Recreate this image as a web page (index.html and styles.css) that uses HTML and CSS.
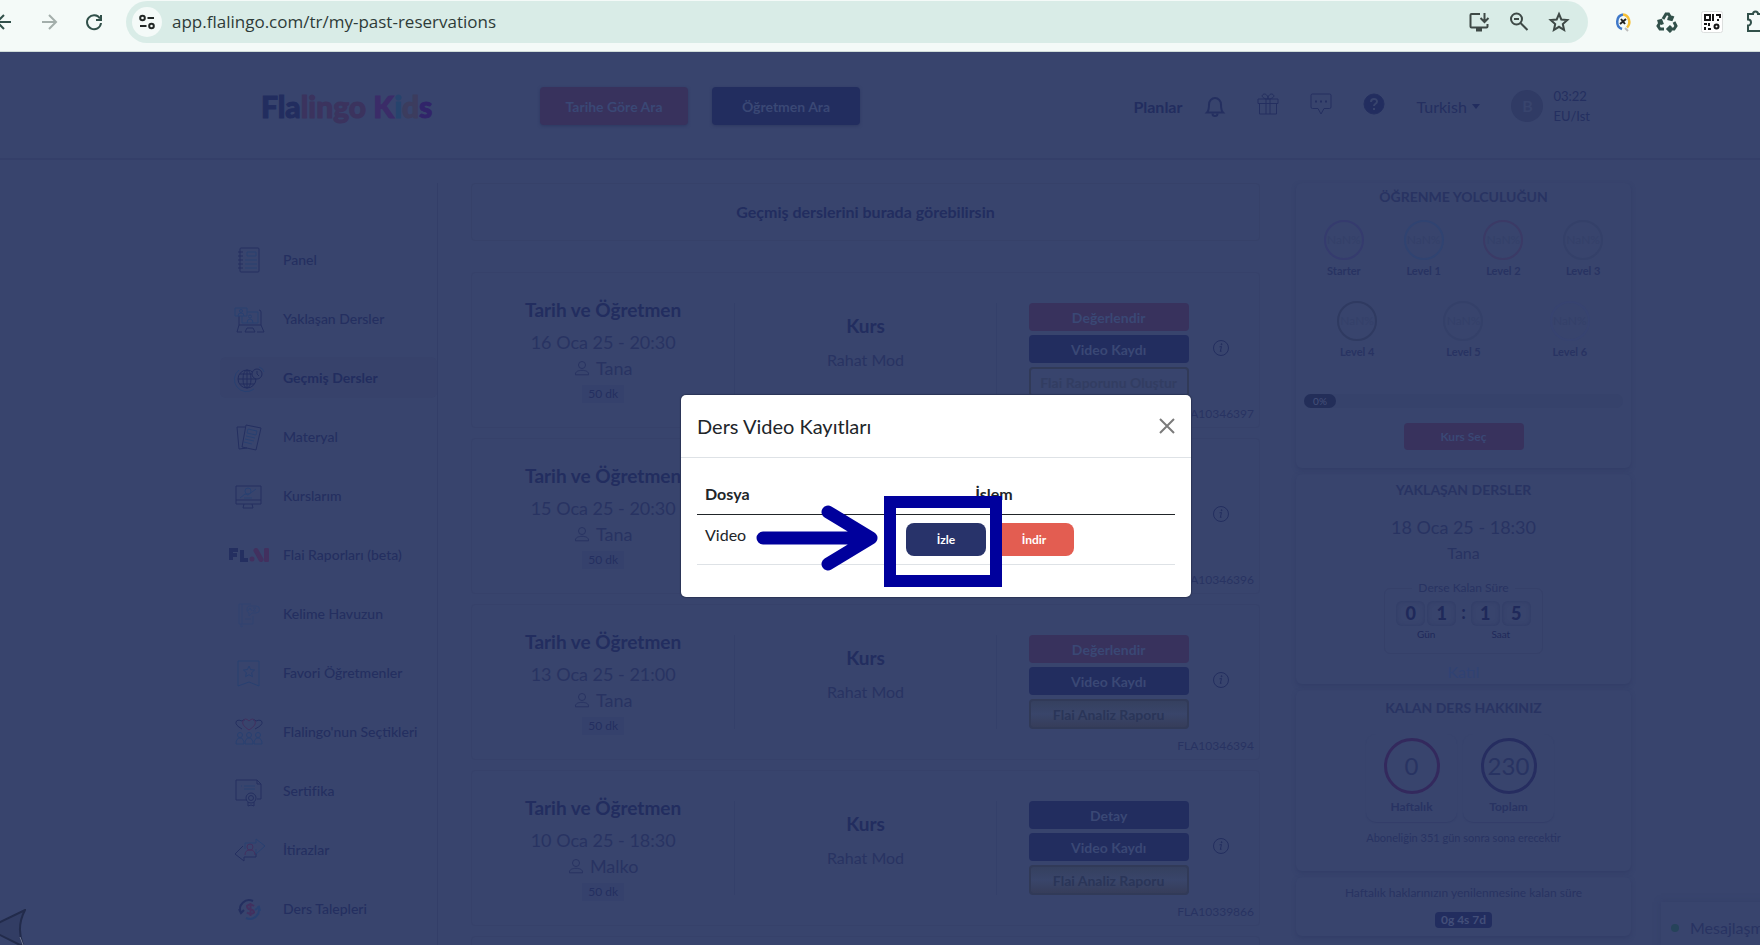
FILE: index.html
```html
<!DOCTYPE html>
<html lang="tr">
<head>
  <meta charset="utf-8">
  <title>Flalingo Kids</title>
  <link rel="stylesheet" href="styles.css">
</head>
<body>
  <svg class="defs" width="0" height="0">
    <symbol id="user" viewBox="0 0 16 16"><circle cx="8" cy="5" r="3.500"/><path d="M1.500 14.800v-.8c0-2.500 3-3.700 6.500-3.700s6.500 1.200 6.500 3.700v.8z"/></symbol>
    <symbol id="info" viewBox="0 0 18 18"><circle cx="9" cy="9" r="7.500"/><path d="M7.500 7.800l2-.3-1.200 5 1.300-.4"/><circle cx="9.600" cy="5.200" r=".5"/></symbol>
  </svg>

  <!-- browser bar -->
  <div class="toolbar">
    <button class="tool back" type="button" aria-label="Back"><svg width="11" height="20" viewBox="0 0 11 20"><path d="M11 10H-3M4 3l-7 7 7 7"/></svg></button>
    <button class="tool forward" type="button" aria-label="Forward"><svg width="20" height="20" viewBox="0 0 20 20"><path d="M3 10h14M10 3l7 7-7 7"/></svg></button>
    <button class="tool reload" type="button" aria-label="Reload"><svg width="20" height="20" viewBox="0 0 20 20"><path d="M16 6.500A7 7 0 1 0 17 11M17 3v5h-5"/></svg></button>
    <div class="omnibox">
      <button class="site" type="button" aria-label="Site info"><svg width="18" height="18" viewBox="0 0 18 18"><circle cx="4.500" cy="5" r="2.300"/><path d="M9.500 5H16M2 13h6.500"/><circle cx="13.500" cy="13" r="2.300"/></svg></button>
      <input class="url" type="text" aria-label="Address" value="app.flalingo.com/tr/my-past-reservations">
      <button class="tool" type="button" aria-label="Install"><svg width="22" height="22" viewBox="0 0 22 22"><path d="M12 3H3.500a1 1 0 0 0-1 1v11.500a1 1 0 0 0 1 1h15a1 1 0 0 0 1-1V13M16.500 2v8.500M12.500 7l4 4 4-4"/><path d="M8 18.500h6" stroke-width="4"/></svg></button>
      <button class="tool" type="button" aria-label="Zoom"><svg width="22" height="22" viewBox="0 0 22 22"><circle cx="8.500" cy="8" r="5.500"/><path d="M6 8h5M12.500 12l7 7"/></svg></button>
      <button class="tool" type="button" aria-label="Bookmark"><svg width="22" height="22" viewBox="0 0 22 22"><path d="M11 3l2.300 5.500 6 .5-4.500 4 1.300 6-5.100-3.200L5.900 19l1.300-6-4.500-4 6-.5z"/></svg></button>
    </div>
    <div class="extensions">
      <svg width="20" height="20" viewBox="0 0 20 20"><path d="M10 2.500a7 7.500 0 0 0-1 14.500" stroke="#3f78c9" stroke-width="2.500"/><path d="M10 2.500a7 7.500 0 0 1 4 13" stroke="#f6bf35" stroke-width="2.500"/><path d="M7 12l6-5M8 7l4 5" stroke="#222" stroke-width="2"/><path d="M12 16l3 3" stroke="#bbb" stroke-width="2"/></svg>
      <svg width="22" height="22" viewBox="0 0 22 22" stroke="#6c6f6e" stroke-width="3"><path d="M7 8l3-5h2.500l3 5M17 5l-1.500 3.500-4-1"/><path d="M18 11l2 4-2 3h-4M15 15l-3 3 3 3"/><path d="M8 18H4l-2-3 3-5M1.500 10.500L5 9.500l1.500 4"/></svg>
      <svg width="22" height="22" viewBox="0 0 22 22"><rect x=".5" y=".5" width="21" height="21" rx="2" fill="#fff" stroke="#dcdfde"/><g stroke="#161616" stroke-width="2"><rect x="4" y="4" width="5" height="5"/><path d="M12 3v7M15 4h4v3M17 8v2M3 13h3M8 12v3M4 16v3M7 18h3"/><circle cx="15.500" cy="15.500" r="2"/></g></svg>
      <svg width="14" height="24" viewBox="0 0 14 24" stroke="#31504a" stroke-width="2"><path d="M14 4h-2a2.500 2.500 0 0 0-5 0H2v5.500a3 3 0 0 1 0 6V21h12"/></svg>
    </div>
  </div>

  <header class="header">
    <a class="logo" href="#"><span>Fla</span><span class="l-red">lingo</span> <span class="l-pink">K</span><span class="l-teal">i</span><span class="l-brown">d</span><span class="l-purple">s</span></a>
    <div class="search">
      <button class="btn red" type="button">Tarihe Göre Ara</button>
      <button class="btn navy" type="button">Öğretmen Ara</button>
    </div>
    <nav class="topnav">
      <a class="plans" href="#">Planlar</a>
      <svg width="22" height="26" viewBox="0 0 22 26" stroke-width="2"><path d="M3 19.500c2-2 2-4 2-8a6 6.500 0 0 1 12 0c0 4 0 6 2 8z"/><path d="M8.500 20.500a2.500 2.500 0 0 0 5 0"/></svg>
      <svg width="22" height="26" viewBox="0 0 22 26"><path d="M1 6h20v4.500H1zM2.500 10.500h17V21h-17zM9 6v15M13 6v15M11 6C6 6 4 3 6 1.500S11 2 11 6c0-4 3-6 5-4.500S16 6 11 6"/></svg>
      <svg width="22" height="26" viewBox="0 0 22 26"><path d="M1 2.500a1.500 1.500 0 0 1 1.500-1.500h17A1.500 1.500 0 0 1 21 2.500V14a1.500 1.500 0 0 1-1.500 1.500H14L11 21l-3-5.500H2.500A1.500 1.500 0 0 1 1 14z"/><path d="M5 8.500h2M10 8.500h2M15 8.500h2" stroke-width="2"/></svg>
      <svg width="22" height="26" viewBox="0 0 22 26"><circle cx="11" cy="11" r="10" fill="#222d5f"/><path d="M8 9c0-4 6-4 6-.5 0 2.500-3 2-3 4.500M11 15v2" stroke="#38446d" stroke-width="2"/></svg>
      <label class="lang"><select aria-label="Dil"><option>Turkish</option></select><svg width="8" height="5" viewBox="0 0 8 5"><path d="M0 0h8L4 5z" fill="#222d5f" stroke="none"/></svg></label>
      <div class="account"><span class="avatar">B</span><span class="clock">03:22<br>EU/Ist</span></div>
    </nav>
  </header>

  <div class="page">
    <nav class="sidebar">
      <a href="#"><svg viewBox="0 0 32 32"><rect x="7" y="4" width="19" height="24" rx="1"/><path d="M5 8h5M5 12h5M5 16h5M5 20h5M5 24h5"/><path class="blue" d="M14 8h9v4h-9zM12 16h12M12 20h12M12 24h12"/></svg>Panel</a>
      <a href="#"><svg viewBox="0 0 32 32"><path d="M28 22V9q0-2-2-2M6 13v9h22M6 22l-2 7h5M12 29l2-4h6l2 4zM24 29h7l-3-7"/><path class="blue" d="M2 5h12v8H2zM9 13v7h16V9H14M5 13q0-3 3-3t3 3M14 20q0-4 3-4t3 4"/><circle class="blue" cx="8" cy="8" r="1.500"/><circle class="blue" cx="17" cy="13.500" r="1.500"/></svg>Yaklaşan Dersler</a>
      <a class="active" href="#"><svg viewBox="0 0 32 32"><circle cx="14" cy="17" r="9"/><ellipse cx="14" cy="17" rx="4" ry="9"/><path d="M14 8v18M5 17h18M7 12h12M7 22h14"/><circle cx="24" cy="12" r="5" fill="#37426b"/><path d="M24 9v3l2 2"/><path class="blue" d="M6 8a12 12 0 0 0 15 19M26 5q4 1 5 5"/></svg>Geçmiş Dersler</a>
      <a href="#"><svg viewBox="0 0 32 32"><path d="M12 6H4l2 22 8-1M13 4l15 3-5 22-14-3z"/><path class="blue" d="M15 8l9 2-1 4-9-2zM13 15l9 2M12 18l9 2M11 21l8 2"/></svg>Materyal</a>
      <a href="#"><svg viewBox="0 0 32 32"><path d="M3 6h25v18H3zM3 20h25M11 24l-1 4h10l-1-4"/><path class="blue" d="M7 18l5-4 3 1 8-6M11 18h8"/><circle class="blue" cx="15" cy="11" r="3"/></svg>Kurslarım</a>
      <a href="#"><svg class="flai" viewBox="0 0 40 14" width="40" height="14"><path d="M2 12V2h7M2 7h6M13 2v10h6" stroke-width="4"/><path class="rose" d="M23 11v.1M27 2.500l5 9M37.500 2v10" stroke-width="5" stroke-linecap="round"/></svg>Flai Raporları (beta)</a>
      <a href="#"><svg class="faint" viewBox="0 0 32 32"><path d="M6 6h12M6 6v20h14v-8M9 6v20M8 26v3l2-1"/><path d="M16 8h7a3 3 0 0 1 0 7h-4l-3 3v-3a4 4 0 0 1 0-7M12 21h6M15 13l2-3 2 3M20 10h3l-3 3h3"/></svg>Kelime Havuzun</a>
      <a href="#"><svg class="blue" viewBox="0 0 32 32"><path d="M5 4h21v25l-10-4-11 4z"/><path d="M16 9l1.600 3.600 4 .4-3 2.700.9 4L16 17.700l-3.500 2 .9-4-3-2.700 4-.4z"/></svg>Favori Öğretmenler</a>
      <a href="#"><svg viewBox="0 0 32 32"><path d="M9 13Q2 9 3 6t6-1q2-2 3-1M22 13q8-4 7-7t-6-1q-2-2-3-1"/><path class="rose" d="M16 14Q8 9 10 5t6 0q4-4 6 0t-6 9"/><g class="blue"><circle cx="7" cy="19" r="2.500"/><circle cx="16" cy="19" r="2.500"/><circle cx="25" cy="19" r="2.500"/><path d="M3 28q0-6 4-6t4 6zM12 28q0-6 4-6t4 6zM21 28q0-6 4-6t4 6z"/></g></svg>Flalingo'nun Seçtikleri</a>
      <a href="#"><svg viewBox="0 0 32 32"><path d="M14 25H3V5h21l4 4v15h-4M24 5v4h4"/><path class="blue" d="M8 11h1M11 11h11M11 14h11"/><circle cx="18" cy="23" r="5"/><circle cx="18" cy="23" r="2.500"/><path d="M15 27v4l3-1 3 1v-4"/></svg>Sertifika</a>
      <a href="#"><svg viewBox="0 0 32 32"><path d="M10 12l-8 8 9 7v-4h12v-4"/><path class="blue" d="M12 15V9h11V5l9 7-9 8v-5"/><path class="rose" d="M12 21q0-5 5-5t5 5"/><circle class="rose" cx="17" cy="13" r="3"/></svg>İtirazlar</a>
      <a href="#"><svg viewBox="0 0 32 32"><path d="M8 20A9 9 0 0 1 20 8M6 16l2 4 3-3" stroke-width="2"/><path class="blue" d="M13 25a9 9 0 0 0 12-12M27 18l-1-4-4 3" stroke-width="2"/><path class="rose" d="M21 13q-4-3-7 0 0 3 3.500 3.500t3.500 3q-3 3-7 0M17.500 10v13" stroke-width="2"/></svg>Ders Talepleri</a>
    </nav>

    <main class="main">
      <h1 class="intro">Geçmiş derslerini burada görebilirsin</h1>
      <section class="lesson">
        <div class="when"><h2>Tarih ve Öğretmen</h2><p class="date">16 Oca 25 - 20:30</p><p class="tutor"><svg width="16" height="16"><use href="#user"/></svg>Tana</p><span class="mins">50 dk</span></div>
        <div class="course"><h2>Kurs</h2><p>Rahat Mod</p></div>
        <div class="actions">
          <div class="stack"><button class="btn red" type="button">Değerlendir</button><button class="btn navy" type="button">Video Kaydı</button><button class="btn gold open" type="button">Flai Raporunu Oluştur</button></div>
          <svg class="info" width="18" height="18"><use href="#info"/></svg>
          <p class="code">FLA10346397</p>
        </div>
      </section>
      <section class="lesson">
        <div class="when"><h2>Tarih ve Öğretmen</h2><p class="date">15 Oca 25 - 20:30</p><p class="tutor"><svg width="16" height="16"><use href="#user"/></svg>Tana</p><span class="mins">50 dk</span></div>
        <div class="course"><h2>Kurs</h2><p>Rahat Mod</p></div>
        <div class="actions">
          <div class="stack"><button class="btn red" type="button">Değerlendir</button><button class="btn navy" type="button">Video Kaydı</button><button class="btn gold" type="button">Flai Analiz Raporu</button></div>
          <svg class="info" width="18" height="18"><use href="#info"/></svg>
          <p class="code">FLA10346396</p>
        </div>
      </section>
      <section class="lesson">
        <div class="when"><h2>Tarih ve Öğretmen</h2><p class="date">13 Oca 25 - 21:00</p><p class="tutor"><svg width="16" height="16"><use href="#user"/></svg>Tana</p><span class="mins">50 dk</span></div>
        <div class="course"><h2>Kurs</h2><p>Rahat Mod</p></div>
        <div class="actions">
          <div class="stack"><button class="btn red" type="button">Değerlendir</button><button class="btn navy" type="button">Video Kaydı</button><button class="btn gold" type="button">Flai Analiz Raporu</button></div>
          <svg class="info" width="18" height="18"><use href="#info"/></svg>
          <p class="code">FLA10346394</p>
        </div>
      </section>
      <section class="lesson">
        <div class="when"><h2>Tarih ve Öğretmen</h2><p class="date">10 Oca 25 - 18:30</p><p class="tutor"><svg width="16" height="16"><use href="#user"/></svg>Malko</p><span class="mins">50 dk</span></div>
        <div class="course"><h2>Kurs</h2><p>Rahat Mod</p></div>
        <div class="actions">
          <div class="stack"><button class="btn navy" type="button">Detay</button><button class="btn navy" type="button">Video Kaydı</button><button class="btn gold" type="button">Flai Analiz Raporu</button></div>
          <svg class="info" width="18" height="18"><use href="#info"/></svg>
          <p class="code">FLA10339866</p>
        </div>
      </section>
      <section class="lesson"></section>
    </main>

    <aside class="aside">
      <section class="panel journey">
        <h3>ÖĞRENME YOLCULUĞUN</h3>
        <div class="levels">
          <div><span class="ring purple">NaN%</span>Starter</div>
          <div><span class="ring teal">NaN%</span>Level 1</div>
          <div><span class="ring wine">NaN%</span>Level 2</div>
          <div><span class="ring">NaN%</span>Level 3</div>
        </div>
        <div class="levels three">
          <div><span class="ring dark">NaN%</span>Level 4</div>
          <div><span class="ring">NaN%</span>Level 5</div>
          <div><span class="ring pale">NaN%</span>Level 6</div>
        </div>
        <div class="progress"><span>0%</span></div>
        <button class="btn red" type="button">Kurs Seç</button>
      </section>
      <section class="panel next">
        <h3>YAKLAŞAN DERSLER</h3>
        <p class="date">18 Oca 25 - 18:30</p>
        <p class="name">Tana</p>
        <fieldset>
          <legend>Derse Kalan Süre</legend>
          <div class="count">
            <div><b>0</b><b>1</b><small>Gün</small></div>
            <i>:</i>
            <div><b>1</b><b>5</b><small>Saat</small></div>
          </div>
        </fieldset>
        <a class="join" href="#">Katıl</a>
      </section>
      <section class="panel rights">
        <h3>KALAN DERS HAKKINIZ</h3>
        <div class="totals">
          <div><span class="total week">0</span>Haftalık</div>
          <div><span class="total">230</span>Toplam</div>
        </div>
        <p>Aboneliğin 351 gün sonra sona erecektir</p>
      </section>
      <section class="panel renew">
        <p>Haftalık haklarınızın yenilenmesine kalan süre</p>
        <span class="left">0g 4s 7d</span>
      </section>
    </aside>
  </div>

  <button class="chat" type="button"><span class="dot"></span>Mesajlaşma</button>
  <svg class="corner" width="26" height="36" viewBox="0 0 26 36"><path d="M-2 14L25 1Q16 18 23 36H20L-2 25z" fill="#323d64" stroke="#222b4b" stroke-width="2"/><path d="M20 28l3 8" stroke="#747c96"/></svg>

  <div class="backdrop">
    <div class="modal" role="dialog" aria-labelledby="modalTitle">
      <div class="modal-header">
        <h4 id="modalTitle">Ders Video Kayıtları</h4>
        <button class="close" type="button" aria-label="Kapat"><svg width="16" height="16" viewBox="0 0 16 16"><path d="M1 1l14 14M15 1L1 15"/></svg></button>
      </div>
      <div class="modal-body">
        <table class="files">
          <thead><tr><th>Dosya</th><th class="center">İşlem</th></tr></thead>
          <tbody><tr><td>Video</td><td class="ops"><button class="watch" type="button">İzle</button><button class="download" type="button">İndir</button></td></tr></tbody>
        </table>
      </div>
      <svg class="arrow" width="122" height="66" viewBox="0 0 122 66"><path d="M7 33h108M72 7l43 26-43 26"/></svg>
      <div class="frame"></div>
    </div>
  </div>
</body>
</html>
```
FILE: styles.css
```css
* {
  box-sizing: border-box;
}
body {
  margin: 0;
  height: 100vh;
  overflow: hidden;
  position: relative;
  display: flex;
  flex-direction: column;
  background: #38446d;
  color: #283362;
  font-family: Lato, "Open Sans", sans-serif;
  font-size: 16px;
}
h1, h2, h3, h4, p {
  margin: 0;
}
a {
  color: inherit;
  text-decoration: none;
}
button, input, select {
  font: inherit;
  color: inherit;
  border: 0;
  padding: 0;
  background: none;
}
svg {
  fill: none;
  stroke: currentColor;
  flex: none;
}
.defs {
  position: absolute;
}

/* browser bar */
.toolbar {
  flex: none;
  height: 52px;
  padding-bottom: 8px;
  display: flex;
  align-items: center;
  background: #f4faf8;
  border-bottom: 1px solid #cfdcd9;
  color: #31504a;
}
.tool {
  display: flex;
  stroke-width: 2;
}
.forward {
  margin-left: 28px;
  color: #a3aeab;
}
.reload {
  margin: 0 22px 0 25px;
}
.omnibox {
  flex: 1;
  height: 42px;
  padding: 0 18px 0 6px;
  display: flex;
  align-items: center;
  gap: 18px;
  border-radius: 21px;
  background: #d9ece7;
  color: #3e4946;
}
.site {
  width: 30px;
  height: 30px;
  display: flex;
  align-items: center;
  justify-content: center;
  border-radius: 50%;
  background: #f4faf8;
  color: #202624;
  stroke-width: 2;
}
.url {
  flex: 1;
  margin-left: -8px;
  font-family: "Open Sans", sans-serif;
  font-size: 17px;
  color: #2e3b38;
}
.extensions {
  display: flex;
  align-items: center;
  gap: 23px;
  margin-left: 25px;
}

/* site header */
.header {
  flex: none;
  height: 108px;
  padding: 2px 170px 0 261px;
  display: flex;
  align-items: center;
  border-bottom: 2px solid #343f69;
}
.logo {
  width: 279px;
  font-size: 30px;
  font-weight: 900;
  color: #222d5f;
  -webkit-text-stroke: 1px;
}
.l-red { color: #3b335e; }
.l-pink { color: #3b2c68; }
.l-teal { color: #26436d; }
.l-brown { color: #3c3c5e; }
.l-purple { color: #31246a; }
.search {
  display: flex;
  gap: 24px;
}
.btn {
  border-radius: 4px;
  font-weight: 700;
  font-size: 14px;
  color: #3a4875;
}
.red { background: #38325d; }
.navy { background: #222d5f; }
.search .btn {
  width: 148px;
  height: 38px;
  box-shadow: 0 1px 3px #2d3862;
}
.topnav {
  margin-left: auto;
  display: flex;
  align-items: center;
  gap: 31px;
  color: #242f60;
}
.plans {
  margin-right: -9px;
  font-weight: 700;
  color: #222d5f;
}
.lang {
  display: flex;
  align-items: center;
  gap: 5px;
}
.lang select {
  appearance: none;
}
.account {
  display: flex;
  align-items: center;
  gap: 10px;
}
.avatar {
  width: 32px;
  height: 32px;
  line-height: 32px;
  border-radius: 50%;
  text-align: center;
  font-weight: 700;
  background: #303b65;
  color: #38446d;
}
.clock {
  font-size: 13px;
  line-height: 20px;
}

/* columns */
.page {
  flex: 1;
  min-height: 0;
  overflow: hidden;
  display: grid;
  grid-template-columns: 218px minmax(0, 1fr) 335px;
  padding: 23px 129px 0 220px;
}
.sidebar {
  display: flex;
  flex-direction: column;
  gap: 18px;
  padding-top: 56px;
  border-right: 1px solid #333e68;
  font-size: 14px;
  font-weight: 500;
  color: #242f60;
}
.sidebar a {
  height: 41px;
  display: flex;
  align-items: center;
  gap: 18px;
  padding-left: 13px;
  white-space: nowrap;
}
.sidebar svg {
  width: 32px;
  height: 32px;
}
.sidebar .flai {
  width: 40px;
  height: 14px;
  margin: 0 -4px;
}
.sidebar .active {
  background: #37426b;
  border-radius: 6px;
  font-weight: 700;
  color: #222d5f;
}
.blue { stroke: #284071; }
.rose { stroke: #42305f; }
.faint { stroke: #304371; }

.main {
  padding: 0 36px 0 33px;
}
.intro {
  height: 58px;
  margin-bottom: 31px;
  line-height: 55px;
  border: 1px solid #364169;
  border-radius: 4px;
  text-align: center;
  font-size: 16px;
  color: #222d5f;
}
.lesson {
  display: grid;
  grid-template-columns: repeat(3, 1fr);
  min-height: 156px;
  margin-bottom: 10px;
  border: 1px solid #36416a;
  border-radius: 4px;
}
.lesson h2 {
  font-size: 19px;
  line-height: 28px;
  color: #222d5f;
}
.when {
  padding-top: 23px;
  text-align: center;
}
.date {
  margin-top: 4px;
  font-size: 18px;
  line-height: 28px;
}
.tutor {
  display: flex;
  justify-content: center;
  align-items: center;
  gap: 6px;
  font-size: 18px;
  line-height: 24px;
}
.mins {
  display: inline-block;
  margin-top: 5px;
  padding: 0 6px;
  font-size: 12px;
  line-height: 18px;
  background: #35416c;
  color: #242f60;
}
.course {
  margin: 30px 0;
  padding-top: 9px;
  border: solid #34406a;
  border-width: 0 1px;
  text-align: center;
  line-height: 24px;
}
.course p {
  margin-top: 8px;
}
.actions {
  display: grid;
  grid-template-columns: 160px 1fr;
  align-content: start;
  align-items: center;
  column-gap: 23px;
  padding: 30px 5px 0 32px;
}
.info {
  margin-bottom: 4px;
  color: #232e5f;
}
.stack {
  display: flex;
  flex-direction: column;
  gap: 4px;
}
.stack .btn {
  height: 28px;
}
.stack .gold {
  height: 30px;
  border: 2px solid #313a58;
  background: linear-gradient(#35405f, #39456a, #363d5a);
  color: #2a3558;
}
.stack .open {
  background: none;
  color: #323d62;
}
.code {
  grid-column: 1 / 3;
  margin-top: 8px;
  text-align: right;
  font-size: 12px;
  line-height: 18px;
}

/* right column */
.aside {
  display: flex;
  flex-direction: column;
  gap: 6px;
}
.panel {
  display: flex;
  flex-direction: column;
  align-items: center;
  border-radius: 6px;
  box-shadow: 0 2px 4px #323d67;
}
.panel h3 {
  font-size: 14px;
  line-height: 20px;
}
.journey {
  padding: 4px 8px 18px;
}
.levels {
  align-self: stretch;
  display: grid;
  grid-template-columns: repeat(4, 1fr);
  margin-top: 13px;
  text-align: center;
  font-size: 11px;
  font-weight: 700;
  line-height: 16px;
}
.three {
  grid-template-columns: repeat(3, 1fr);
  margin-top: 22px;
}
.ring {
  display: block;
  width: 40px;
  height: 40px;
  margin: 0 auto 3px;
  border: 2px solid #344069;
  border-radius: 50%;
  font-size: 12px;
  font-weight: 400;
  line-height: 36px;
  color: #344069;
}
.purple { border-color: #353b6e; }
.teal { border-color: #304371; }
.wine { border-color: #3b3a66; }
.dark { border-color: #2f3a61; }
.pale { border-color: #374370; }
.progress {
  align-self: stretch;
  margin: 34px 0 15px;
  border-radius: 7px;
  background: #36426b;
}
.progress span {
  display: block;
  width: 32px;
  border-radius: 7px;
  text-align: center;
  font-size: 10px;
  line-height: 14px;
  background: #232e59;
  color: #46517a;
}
.journey .btn {
  width: 120px;
  height: 27px;
  font-size: 12px;
}
.next {
  padding-top: 6px;
}
.next .date {
  margin-top: 13px;
}
.name {
  line-height: 24px;
}
.next fieldset {
  width: 159px;
  margin: 14px 0 6px;
  padding: 4px 0 12px;
  border: 1px solid #354069;
  border-radius: 6px;
}
.next legend {
  margin: 0 auto;
  padding: 0 6px;
  font-size: 12px;
  line-height: 18px;
}
.count {
  display: flex;
  justify-content: center;
  gap: 5px;
  font-size: 18px;
  font-weight: 700;
  color: #1f295a;
}
.count div {
  display: grid;
  grid-template-columns: 29px 29px;
  gap: 1px 2px;
}
.count b {
  border-radius: 6px;
  text-align: center;
  line-height: 25px;
  box-shadow: inset 0 0 4px #2f3a65;
}
.count i {
  font-style: normal;
}
.count small {
  grid-column: 1 / 3;
  text-align: center;
  font-size: 10px;
  font-weight: 400;
  line-height: 14px;
}
.join {
  line-height: 24px;
  color: #304273;
}
.rights {
  padding: 8px 0 25px;
}
.totals {
  display: flex;
  gap: 6px;
  margin: 16px 7px 8px 0;
}
.totals div {
  width: 91px;
  padding: 4px 0 6px;
  border-radius: 10px;
  text-align: center;
  font-size: 12px;
  font-weight: 700;
  line-height: 18px;
  box-shadow: 0 1px 1px #333e69;
}
.total {
  display: block;
  width: 56px;
  height: 56px;
  margin: 0 auto 4px;
  border: 3px solid #262d60;
  border-radius: 50%;
  font-size: 24px;
  font-weight: 400;
  line-height: 50px;
}
.week {
  border-color: #33295d;
}
.rights p {
  font-size: 11px;
  line-height: 16px;
}
.renew {
  gap: 10px;
  padding: 7px 0 8px;
  font-size: 12px;
  line-height: 18px;
}
.left {
  padding: 0 6px;
  border-radius: 4px;
  font-weight: 700;
  line-height: 16px;
  background: #222d5f;
  color: #434f79;
}

.chat {
  position: absolute;
  left: 1661px;
  bottom: 0;
  height: 43px;
  padding: 8px 10px 0;
  display: flex;
  align-items: center;
  gap: 11px;
  box-shadow: 0 0 6px #333e68;
}
.dot {
  width: 8px;
  height: 8px;
  border-radius: 50%;
  background: #26435a;
}
.corner {
  position: absolute;
  left: 0;
  bottom: 0;
}

/* video dialog */
.backdrop {
  position: absolute;
  top: 395px;
  left: 112px;
  right: 0;
  display: flex;
  justify-content: center;
  pointer-events: none;
}
.modal {
  position: relative;
  width: 510px;
  border-radius: 5px;
  background: #fff;
  color: #212529;
  box-shadow: 0 0 1px 1px #2b3556;
  pointer-events: auto;
}
.modal-header {
  height: 63px;
  padding: 0 16px;
  display: flex;
  align-items: center;
  justify-content: space-between;
  border-bottom: 1px solid #dee2e6;
}
.modal-header h4 {
  font-size: 20px;
  font-weight: 400;
}
.close {
  display: flex;
  color: #7b7b7b;
  stroke-width: 2;
}
.modal-body {
  padding: 16px 16px 32px;
}
.files {
  width: 100%;
  border-collapse: collapse;
  text-align: left;
  line-height: 24px;
}
.files th {
  padding: 8px;
  border-bottom: 1px solid #212529;
}
.files td {
  padding: 8px;
  vertical-align: top;
  border-bottom: 1px solid #dee2e6;
}
.files .center {
  text-align: center;
}
.files .ops {
  width: 362px;
  padding-right: 16px;
  text-align: center;
}
.ops button {
  width: 80px;
  height: 33px;
  margin: 0 4px;
  border-radius: 8px;
  font-size: 12px;
  font-weight: 700;
  color: #fff;
  vertical-align: top;
}
.watch { background: #28336a; }
.download { background: #e35d51; }
.arrow {
  position: absolute;
  left: 75px;
  top: 110px;
  stroke: #00009c;
  stroke-width: 13;
  stroke-linecap: round;
  stroke-linejoin: round;
}
.frame {
  position: absolute;
  left: 203px;
  top: 101px;
  width: 118px;
  height: 91px;
  border: 12px solid #00009c;
}
```
